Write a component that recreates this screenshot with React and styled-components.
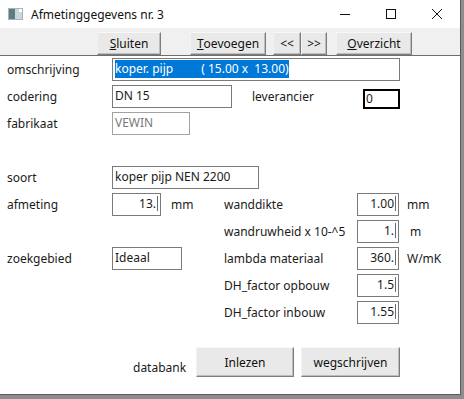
import React from 'react';
import styled, { createGlobalStyle, css } from 'styled-components';

const GlobalStyle = createGlobalStyle`
  html, body {
    margin: 0;
    padding: 0;
    background: #8d8d8d;
  }
  body {
    font-family: "Noto Sans", "Liberation Sans", sans-serif;
    font-size: 12px;
    color: #1a1a1a;
  }
`;

const Desktop = styled.div`
  width: 464px;
  height: 399px;
  overflow: hidden;
  background: #8d8d8d;
`;

const Window = styled.div`
  width: 460px;
  height: 394px;
  background: #ffffff;
  border-right: 1px solid #5c5c5c;
  border-bottom: 1px solid #5c5c5c;
  display: flex;
  flex-direction: column;
`;

const TitleBar = styled.div`
  height: 28px;
  display: flex;
  align-items: center;
  padding-left: 8px;
  flex-shrink: 0;
`;

const Title = styled.span`
  margin-left: 8px;
  font-size: 12px;
  color: #111;
  flex: 1;
`;

const Controls = styled.div`
  display: flex;
  align-items: center;
`;

const ControlBox = styled.div`
  width: 46px;
  height: 28px;
  display: flex;
  align-items: center;
  justify-content: center;
`;

const Toolbar = styled.div`
  height: 28px;
  background: #f0f0f0;
  border-bottom: 1px solid #6e6e6e;
  display: flex;
  align-items: flex-start;
  padding: 4px 0 0 97px;
  box-sizing: border-box;
  flex-shrink: 0;
`;

const Button = styled.button`
  width: ${p => p.$w}px;
  height: ${p => p.$h || 23}px;
  margin-left: ${p => p.$ml || 0}px;
  padding: 0;
  font-family: inherit;
  font-size: 12px;
  color: #111;
  background: #e9e9e9;
  border: 1px solid;
  border-color: #f8f8f8 #7d7d7d #7d7d7d #f2f2f2;
  box-shadow: inset -1px -1px 0 #bdbdbd;
  display: flex;
  align-items: center;
  justify-content: center;
  flex-shrink: 0;
  u {
    text-decoration: underline;
  }
`;

const Form = styled.div`
  flex: 1;
  display: flex;
  flex-direction: column;
  padding: 2px 0 0 7px;
`;

const Row = styled.div`
  display: flex;
  align-items: center;
  height: 23px;
  margin-top: ${p => p.$mt ?? 4}px;
`;

const Label = styled.div`
  width: ${p => p.$w || 105}px;
  margin-left: ${p => p.$ml || 0}px;
  flex-shrink: 0;
  white-space: nowrap;
`;

const Slot = styled.div`
  width: 112px;
  height: 100%;
  display: flex;
  align-items: center;
  flex-shrink: 0;
`;

const Field = styled.div`
  width: ${p => p.$w}px;
  height: ${p => p.$h || 23}px;
  box-sizing: border-box;
  border: 1px solid #7a7a7a;
  background: #fff;
  display: flex;
  align-items: flex-start;
  justify-content: ${p => (p.$right ? 'flex-end' : 'flex-start')};
  padding: 1px ${p => (p.$right ? 2 : 0)}px 0 2px;
  white-space: pre;
  flex-shrink: 0;
  line-height: 17px;
  ${p => p.$muted && css`
    border-color: #a2a2a2;
    color: #7a7a7a;
  `}
  ${p => p.$focus && css`
    border: 2px solid #000;
    align-self: flex-end;
    margin-bottom: -1px;
    padding: 0 0 0 1px;
    line-height: 16px;
  `}
`;

const Selected = styled.span`
  background: #0078d7;
  color: #fff;
  white-space: pre;
  line-height: 18px;
`;

const Caret = styled.span`
  border-right: 1px solid #6a6a6a;
  padding-right: 1px;
  line-height: 15px;
  margin-top: 1px;
`;

const Unit = styled.span`
  margin-left: ${p => p.$ml || 8}px;
  white-space: nowrap;
`;

const Footer = styled.div`
  display: flex;
  align-items: flex-start;
  margin-top: 23px;
  padding-left: 126px;
`;

const FooterLabel = styled.span`
  margin-top: 12px;
  width: 63px;
`;

const AppIcon = () => (
  <svg width="15" height="12" viewBox="0 0 15 12">
    <rect x="0" y="0" width="15" height="12" fill="#a9b4ba" />
    <rect x="1" y="1" width="6" height="10" fill="#5d7d84" />
    <rect x="7" y="1" width="7" height="10" fill="#cfd6da" />
    <rect x="11" y="1" width="3" height="3" fill="#ffffff" />
  </svg>
);

const MinIcon = () => (
  <svg width="12" height="12" viewBox="0 0 12 12">
    <line x1="1" y1="6.5" x2="11" y2="6.5" stroke="#111" strokeWidth="1" />
  </svg>
);

const MaxIcon = () => (
  <svg width="12" height="12" viewBox="0 0 12 12">
    <rect x="1.5" y="1.5" width="9" height="9" fill="none" stroke="#111" strokeWidth="1" />
  </svg>
);

const CloseIcon = () => (
  <svg width="12" height="12" viewBox="0 0 12 12">
    <path d="M1 1 L11 11 M11 1 L1 11" stroke="#111" strokeWidth="1" />
  </svg>
);

const NumField = ({ children }) => (
  <Field $w={42} $right>
    <Caret>{children}</Caret>
  </Field>
);

export default function App() {
  return (
    <Desktop>
      <GlobalStyle />
      <Window>
        <TitleBar>
          <AppIcon />
          <Title>Afmetinggegevens nr. 3</Title>
          <Controls>
            <ControlBox><MinIcon /></ControlBox>
            <ControlBox><MaxIcon /></ControlBox>
            <ControlBox><CloseIcon /></ControlBox>
          </Controls>
        </TitleBar>

        <Toolbar>
          <Button $w={64}><u>S</u>luiten</Button>
          <Button $w={76} $ml={29}><u>T</u>oevoegen</Button>
          <Button $w={28} $ml={7}>&lt;&lt;</Button>
          <Button $w={26}>&gt;&gt;</Button>
          <Button $w={76} $ml={9}><u>O</u>verzicht</Button>
        </Toolbar>

        <Form>
          <Row $mt={0}>
            <Label>omschrijving</Label>
            <Field $w={288}>
              <Selected>{'koper. pijp         ( 15.00 x  13.00)'}</Selected>
            </Field>
          </Row>
          <Row>
            <Label>codering</Label>
            <Field $w={120}>DN 15</Field>
            <Label $w={111} $ml={20}>leverancier</Label>
            <Field $w={37} $h={20} $focus>0</Field>
          </Row>
          <Row>
            <Label>fabrikaat</Label>
            <Field $w={78} $muted>VEWIN</Field>
          </Row>

          <Row $mt={31}>
            <Label>soort</Label>
            <Field $w={147}>koper pijp NEN 2200</Field>
          </Row>
          <Row>
            <Label>afmeting</Label>
            <Slot>
              <Field $w={49} $right><Caret>13.</Caret></Field>
              <Unit $ml={10}>mm</Unit>
            </Slot>
            <Label $w={133}>wanddikte</Label>
            <NumField>1.00</NumField>
            <Unit>mm</Unit>
          </Row>
          <Row>
            <Label />
            <Slot />
            <Label $w={133}>wandruwheid x 10-^5</Label>
            <NumField>1.</NumField>
            <Unit $ml={11}>m</Unit>
          </Row>
          <Row>
            <Label>zoekgebied</Label>
            <Slot>
              <Field $w={70}>Ideaal</Field>
            </Slot>
            <Label $w={133}>lambda materiaal</Label>
            <NumField>360.</NumField>
            <Unit>W/mK</Unit>
          </Row>
          <Row>
            <Label />
            <Slot />
            <Label $w={133}>DH_factor opbouw</Label>
            <NumField>1.5</NumField>
          </Row>
          <Row>
            <Label />
            <Slot />
            <Label $w={133}>DH_factor inbouw</Label>
            <NumField>1.55</NumField>
          </Row>

          <Footer>
            <FooterLabel>databank</FooterLabel>
            <Button $w={98} $h={30}>Inlezen</Button>
            <Button $w={99} $h={30} $ml={7}>wegschrijven</Button>
          </Footer>
        </Form>
      </Window>
    </Desktop>
  );
}
